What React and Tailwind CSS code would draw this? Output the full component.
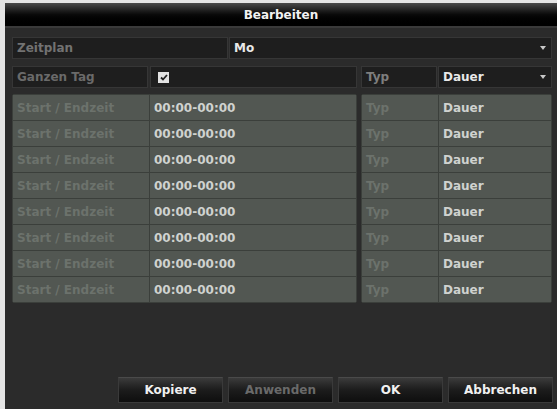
import React from "react";

const rows = Array.from({ length: 8 }, (_, i) => i);

const Arrow = () => (
  <svg width="6" height="4" viewBox="0 0 6 4" className="shrink-0">
    <path d="M0 0 L6 0 L3 4 Z" fill="#c8c8c8" />
  </svg>
);

const Btn = ({ label, disabled }) => (
  <div className="w-[105px] h-[26px] flex items-center justify-center border border-[#3a3a3a] border-t-[#4a4a4a] bg-gradient-to-b from-[#3b3b3b] via-[#1c1c1c] to-[#0e0e0e]">
    <span className={disabled ? "text-[#6a6a6a]" : "text-[#f0f0f0]"}>{label}</span>
  </div>
);

export default function App() {
  return (
    <div className="w-[557px] h-[409px] bg-[#e4e4e4] pl-[5px] pt-[3px] font-['DejaVu_Sans',sans-serif] text-[12px] font-bold overflow-hidden">
      <div className="h-full flex flex-col bg-[#2b2b2b]">
        {/* Title */}
        <div className="h-[25px] shrink-0 flex items-center justify-center bg-gradient-to-b from-[#4a4a4a] via-[#0a0a0a] to-[#000] border-b-2 border-[#3a3a3a]">
          <span className="text-[#f2f2f2]">Bearbeiten</span>
        </div>

        <div className="pl-[7px] pr-[5px] flex flex-col">
          {/* Zeitplan */}
          <div className="mt-[9px] h-[22px] flex gap-px">
            <div className="w-[216px] bg-[#1e1e1e] border border-[#363636] flex items-center pl-[4px] text-[#727272]">
              Zeitplan
            </div>
            <div className="flex-1 bg-[#1e1e1e] border border-[#363636] flex items-center justify-between pl-[4px] pr-[5px] text-[#e8e8e8]">
              <span>Mo</span>
              <Arrow />
            </div>
          </div>

          {/* Ganzen Tag */}
          <div className="mt-[7px] h-[22px] flex">
            <div className="w-[136px] bg-[#1e1e1e] border border-[#363636] flex items-center pl-[4px] text-[#6a6a6a]">
              Ganzen Tag
            </div>
            <div className="ml-[2px] w-[207px] bg-[#1e1e1e] border border-[#363636] flex items-center pl-[7px]">
              <div className="w-[11px] h-[11px] bg-[#e2e2e2] flex items-center justify-center">
                <svg width="8" height="7" viewBox="0 0 8 7">
                  <path d="M1 3.5 L3 5.5 L7 1" stroke="#222" strokeWidth="1.8" fill="none" />
                </svg>
              </div>
            </div>
            <div className="ml-[4px] w-[76px] bg-[#1e1e1e] border border-[#363636] flex items-center pl-[4px] text-[#7e7e7e]">
              Typ
            </div>
            <div className="ml-px flex-1 bg-[#1e1e1e] border border-[#363636] flex items-center justify-between pl-[4px] pr-[5px] text-[#e8e8e8]">
              <span>Dauer</span>
              <Arrow />
            </div>
          </div>

          {/* Schedule grid */}
          <div className="mt-[6px] flex gap-[4px]">
            <div className="w-[345px] grid grid-cols-[136px_1fr] gap-px bg-[#3b3f3b] border border-[#3b3f3b] rounded-[2px]">
              {rows.map((i) => (
                <React.Fragment key={i}>
                  <div className="h-[25px] bg-[#525752] flex items-center pl-[4px] text-[#6c726c]">
                    Start / Endzeit
                  </div>
                  <div className="h-[25px] bg-[#525752] flex items-center pl-[4px] text-[#cfd2cf]">
                    00:00-00:00
                  </div>
                </React.Fragment>
              ))}
            </div>
            <div className="flex-1 grid grid-cols-[76px_1fr] gap-px bg-[#3b3f3b] border border-[#3b3f3b] rounded-[2px]">
              {rows.map((i) => (
                <React.Fragment key={i}>
                  <div className="h-[25px] bg-[#525752] flex items-center pl-[4px] text-[#6c726c]">
                    Typ
                  </div>
                  <div className="h-[25px] bg-[#525752] flex items-center pl-[4px] text-[#cfd2cf]">
                    Dauer
                  </div>
                </React.Fragment>
              ))}
            </div>
          </div>
        </div>

        <div className="flex-1" />

        {/* Buttons */}
        <div className="flex justify-end gap-[5px] pr-[4px] pb-[6px]">
          <Btn label="Kopiere" />
          <Btn label="Anwenden" disabled />
          <Btn label="OK" />
          <Btn label="Abbrechen" />
        </div>
      </div>
    </div>
  );
}
